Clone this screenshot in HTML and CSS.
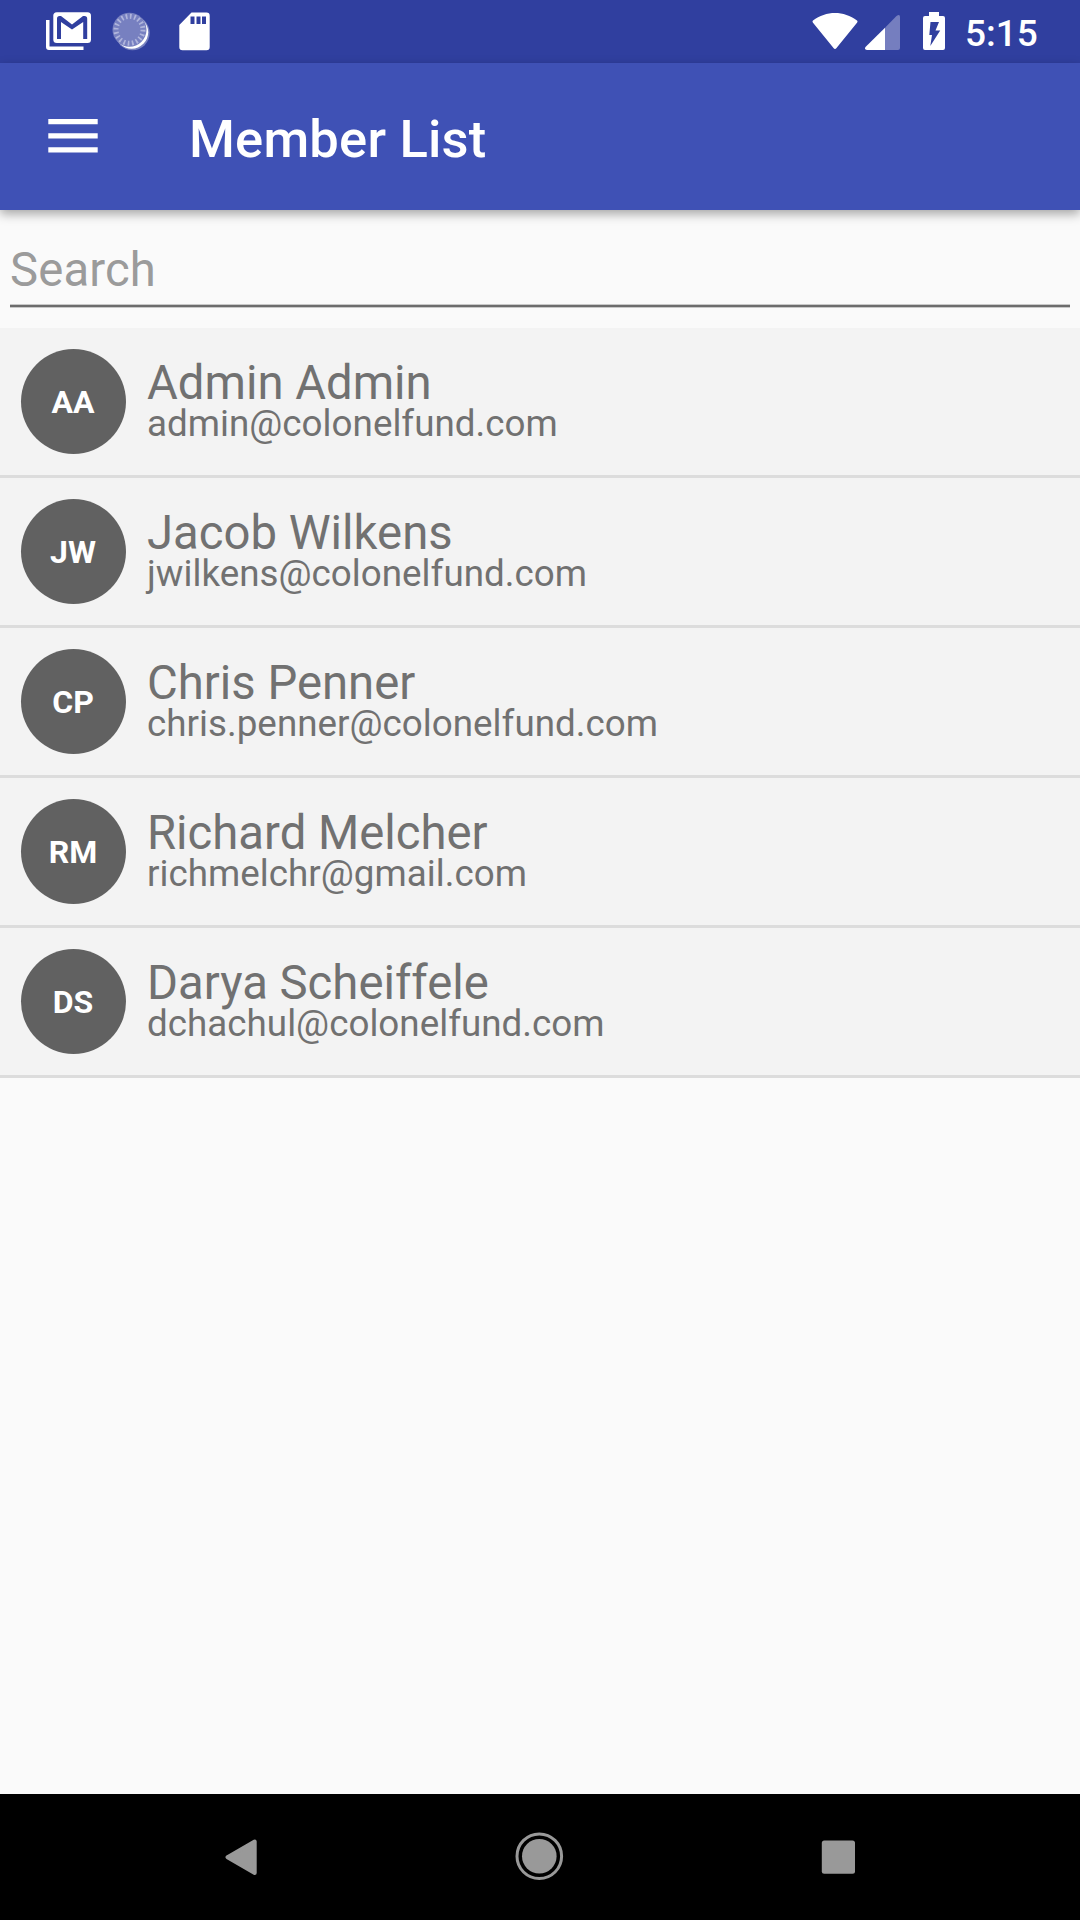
FILE: index.html
```html
<!DOCTYPE html>
<html lang="en">
<head>
<meta charset="utf-8">
<title>Member List</title>
<link rel="stylesheet" href="styles.css">
</head>
<body>
<div class="screen">
  <div class="status">
    <svg class="gmail" width="46" height="40" viewBox="46 11 46 40">
      <path fill="#fff" d="M46 20h3.500v26.500H83.500V50H49q-3 0-3-3z"/>
      <rect x="53.300" y="12.300" width="37.700" height="30.700" rx="3.500" fill="#fff"/>
      <path fill="#303f9f" d="M57 39V18.500q0-2.500 2.500-2.500H61L72 24.500 83 16h1.500q2.700 0 2.700 2.500V39H83.200V22L72 29.500 61 22V39z"/>
    </svg>
    <svg class="sync" width="38" height="40" viewBox="112 11 38 40">
      <circle cx="132.500" cy="33" r="17.200" fill="#fff" opacity=".35"/>
      <circle cx="131.700" cy="32.200" r="16.500" fill="#fff"/>
      <circle cx="129.500" cy="29.800" r="17" fill="#7780c0"/>
      <circle cx="129.500" cy="29.800" r="13.500" fill="none" stroke="#b0b5dc" stroke-width="5" stroke-dasharray="1.700 2.541"/>
    </svg>
    <svg class="sd" width="32" height="40" viewBox="179 11 32 40">
      <path fill="#fff" fill-rule="evenodd" d="M191.500 12.500H206.500q3.200 0 3.200 3.200V47q0 3.200-3.200 3.200H182.500q-3.200 0-3.200-3.200V25zM190.500 16.500v7.500h4v-7.500zM196.500 16.500v7.500h4v-7.500zM202 16.500v7.500h4v-7.500z"/>
    </svg>
    <svg class="wifi" width="46" height="40" viewBox="812 11 46 40">
      <path fill="#fff" d="M813 20.500C826 10.500 844 10.500 857 20.500q1 1 0 2.200L836.500 48q-1.500 2-3 0L813 22.700q-1-1.200 0-2.200z"/>
    </svg>
    <svg class="signal" width="36" height="40" viewBox="865 11 36 40">
      <path fill="#757ebf" d="M885 27.800L896.500 16Q900 13.500 900 17V48q0 2-2 2H885z"/>
      <path fill="#fff" d="M885 27.800V50H867q-3-.5-1.500-3z"/>
    </svg>
    <svg class="battery" width="22" height="40" viewBox="923 11 22 40">
      <path fill="#fff" d="M929 12h10v4h4q2 0 2 2v30q0 2-2 2H925q-2 0-2-2V18q0-2 2-2h4z"/>
      <path fill="#303f9f" d="M930.500 22h8.500l-3.500 8.500h4.700L930.300 46l1.700-11h-2.700z"/>
    </svg>
    <span class="clock">5:15</span>
  </div>
  <header class="bar">
    <svg class="menu" width="50" height="36" viewBox="0 0 50 36">
      <path fill="#fff" d="M.3 1h49.400v5.300H.3zM.3 15.200h49.400v5.300H.3zM.3 29.300h49.400v5.300H.3z"/>
    </svg>
    <h1 class="title">Member List</h1>
  </header>
  <div class="search"><div class="field">Search</div></div>
  <ul class="list">
    <li class="row"><div class="avatar">AA</div><div class="info"><div class="name">Admin Admin</div><div class="mail">admin@colonelfund.com</div></div></li>
    <li class="row"><div class="avatar">JW</div><div class="info"><div class="name">Jacob Wilkens</div><div class="mail">jwilkens@colonelfund.com</div></div></li>
    <li class="row"><div class="avatar">CP</div><div class="info"><div class="name">Chris Penner</div><div class="mail">chris.penner@colonelfund.com</div></div></li>
    <li class="row"><div class="avatar">RM</div><div class="info"><div class="name">Richard Melcher</div><div class="mail">richmelchr@gmail.com</div></div></li>
    <li class="row"><div class="avatar">DS</div><div class="info"><div class="name">Darya Scheiffele</div><div class="mail">dchachul@colonelfund.com</div></div></li>
  </ul>
  <nav class="nav">
    <svg width="50" height="50" viewBox="0 0 50 50"><path fill="#999" stroke="#999" stroke-width="4" stroke-linejoin="round" d="M12.500 26.200L39.700 10.500V42z"/></svg>
    <svg width="50" height="50" viewBox="0 0 50 50"><circle cx="25.300" cy="25.200" r="17.300" fill="#999"/><circle cx="25.300" cy="25.200" r="22.300" fill="none" stroke="#999" stroke-width="3"/></svg>
    <svg width="50" height="50" viewBox="0 0 50 50"><rect x="7.800" y="9.500" width="33.200" height="33.200" rx="2.500" fill="#999"/></svg>
  </nav>
</div>
</body>
</html>
```
FILE: styles.css
```css
* { box-sizing: border-box; }
body {
  margin: 0;
  font-family: Roboto, "Liberation Sans", sans-serif;
  background: #fafafa;
}
svg { display: block; flex: none; }
.screen {
  width: 1080px;
  height: 1920px;
  display: flex;
  flex-direction: column;
  overflow: hidden;
}
.status {
  height: 63px;
  flex: none;
  background: #303f9f;
  display: flex;
  align-items: flex-start;
  padding: 11px 42px 0 46px;
}
.sync { margin-left: 20px; }
.sd { margin-left: 29px; }
.wifi { margin-left: auto; }
.signal { margin-left: 7px; }
.battery { margin-left: 22px; }
.clock {
  margin-left: 20px;
  width: 73px;
  font-size: 37px;
  font-weight: 500;
  line-height: 46px;
  white-space: nowrap;
  color: #fff;
}
.bar {
  height: 147px;
  flex: none;
  background: #3f51b5;
  display: flex;
  align-items: center;
  gap: 91px;
  padding: 0 0 2px 48px;
  box-shadow: 0 4px 10px rgba(0, 0, 0, .34);
}
.title {
  margin: 6px 0 0;
  font-size: 52.5px;
  font-weight: 500;
  line-height: 62px;
  letter-spacing: .2px;
  color: #fff;
}
.search {
  height: 118px;
  flex: none;
  padding: 30px 10px 0;
}
.field {
  height: 68px;
  background: linear-gradient(#c8c8c8 0 1px, #6c6c6c 1px 3px, #c8c8c8 3px) bottom / 100% 4px no-repeat;
  font-size: 47.25px;
  line-height: 61px;
  letter-spacing: .15px;
  color: #9b9b9b;
}
.list {
  margin: 0;
  padding: 0;
  list-style: none;
  flex: 1;
}
.row {
  height: 150px;
  display: flex;
  padding: 21px;
  background: #f3f3f3;
  border-bottom: 3px solid #dcdcdc;
}
.avatar {
  width: 105px;
  height: 105px;
  padding-right: 1px;
  border-radius: 50%;
  background: #616161;
  color: #fff;
  font-size: 32px;
  font-weight: 700;
  line-height: 107px;
  text-align: center;
}
.info {
  margin-left: 21px;
  padding-top: 10px;
  color: #717171;
}
.name { font-size: 47.25px; line-height: 48px; }
.mail { font-size: 36.75px; line-height: 33px; letter-spacing: .03px; }
.nav {
  height: 126px;
  flex: none;
  background: #000;
  display: flex;
  gap: 249.3px;
  padding: 37px 0 0 215px;
}
```
